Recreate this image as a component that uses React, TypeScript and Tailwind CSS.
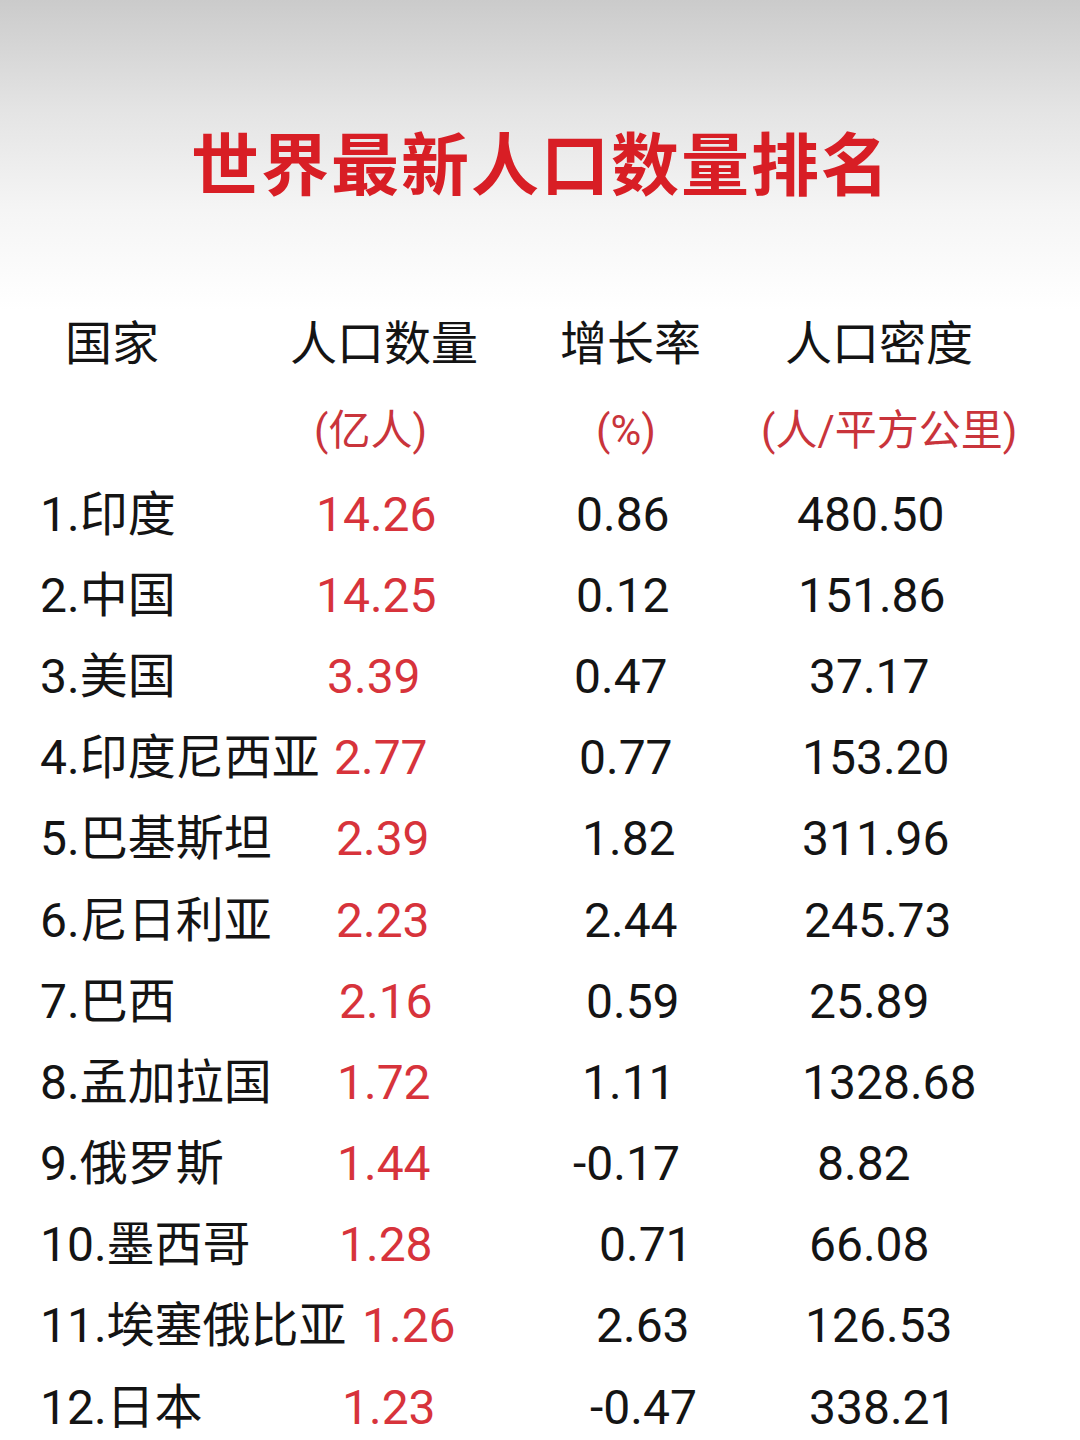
const rows = [
  { name: "1.印度", pop: "14.26", rate: "0.86", dens: "480.50", p: "ml-[-2px]", r: "ml-[19px]", d: "ml-[19px]" },
  { name: "2.中国", pop: "14.25", rate: "0.12", dens: "151.86", p: "ml-[-2px]", r: "ml-[19px]", d: "ml-[20px]" },
  { name: "3.美国", pop: "3.39", rate: "0.47", dens: "37.17", p: "ml-[9px]", r: "ml-[17px]", d: "ml-[31px]" },
  { name: "4.印度尼西亚", pop: "2.77", rate: "0.77", dens: "153.20", p: "ml-[16px]", r: "ml-[22px]", d: "ml-[24px]" },
  { name: "5.巴基斯坦", pop: "2.39", rate: "1.82", dens: "311.96", p: "ml-[18px]", r: "ml-[25px]", d: "ml-[24px]" },
  { name: "6.尼日利亚", pop: "2.23", rate: "2.44", dens: "245.73", p: "ml-[18px]", r: "ml-[27px]", d: "ml-[26px]" },
  { name: "7.巴西", pop: "2.16", rate: "0.59", dens: "25.89", p: "ml-[21px]", r: "ml-[29px]", d: "ml-[31px]" },
  { name: "8.孟加拉国", pop: "1.72", rate: "1.11", dens: "1328.68", p: "ml-[19px]", r: "ml-[25px]", d: "ml-[24px]" },
  { name: "9.俄罗斯", pop: "1.44", rate: "-0.17", dens: "8.82", p: "ml-[19px]", r: "ml-[16px]", d: "ml-[39px]" },
  { name: "10.墨西哥", pop: "1.28", rate: "0.71", dens: "66.08", p: "ml-[21px]", r: "ml-[42px]", d: "ml-[31px]" },
  { name: "11.埃塞俄比亚", pop: "1.26", rate: "2.63", dens: "126.53", p: "ml-[44px]", r: "ml-[39px]", d: "ml-[27px]" },
  { name: "12.日本", pop: "1.23", rate: "-0.47", dens: "338.21", p: "ml-[24px]", r: "ml-[33px]", d: "ml-[31px]" },
];

export default function App() {
  return (
    <div
      className="h-[1440px] w-[1080px] overflow-hidden bg-[linear-gradient(to_bottom,#cbcbcb_0px,#e4e4e4_110px,#f5f5f5_210px,#ffffff_310px,#ffffff_1440px)] text-[#141414]"
      style={{ fontFamily: "Roboto, 'Noto Sans CJK SC', sans-serif" }}
    >
      {/* Title */}
      <div className="h-[298px] pt-[133px]">
        <h1 className="pl-[2px] text-center text-[68px] font-bold leading-none tracking-[2px] text-[#d81e25]">
          世界最新人口数量排名
        </h1>
      </div>

      {/* Header */}
      <div className="grid h-[90px] grid-cols-[225px_270px_225px_1fr] items-center pl-[65px] text-[47px] leading-none">
        <span>国家</span>
        <span>人口数量</span>
        <span>增长率</span>
        <span>人口密度</span>
      </div>

      {/* Units */}
      <div className="grid h-[86px] grid-cols-[282px_165px_1fr] items-center pl-[314px] text-[42px] leading-none text-[#c9343b]">
        <span>(亿人)</span>
        <span>(%)</span>
        <span>(人/平方公里)</span>
      </div>

      {/* Rows */}
      <div>
        {rows.map((row) => (
          <div
            key={row.name}
            className="grid h-[81.2px] grid-cols-[278px_239px_221px_1fr] items-center whitespace-nowrap pl-[40px] text-[48px] leading-none"
          >
            <span>{row.name}</span>
            <span className={`${row.p} text-[#d7333b]`}>{row.pop}</span>
            <span className={row.r}>{row.rate}</span>
            <span className={row.d}>{row.dens}</span>
          </div>
        ))}
      </div>
    </div>
  );
}
